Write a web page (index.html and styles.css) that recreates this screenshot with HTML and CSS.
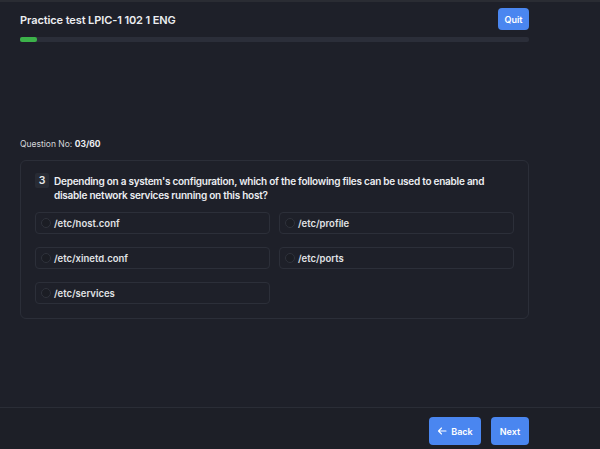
FILE: index.html
```html
<!DOCTYPE html>
<html>
<head>
<meta charset="utf-8">
<link rel="stylesheet" href="styles.css">
</head>
<body>
<div class="page">
  <header class="header">
    <div class="header-row">
      <h1 class="title">Practice test LPIC-1 102 1 ENG</h1>
      <button class="btn quit">Quit</button>
    </div>
    <div class="progress"><div class="progress-fill" style="width:17px"></div></div>
  </header>
  <main class="main">
    <div class="qno">Question No: <b>03/60</b></div>
    <section class="card">
      <div class="question">
        <span class="num">3</span>
        <p class="qtext">Depending on a system's configuration, which of the following files can be used to enable and disable network services running on this host?</p>
      </div>
      <div class="options">
        <label class="option"><span class="radio"></span>/etc/host.conf</label>
        <label class="option"><span class="radio"></span>/etc/profile</label>
        <label class="option"><span class="radio"></span>/etc/xinetd.conf</label>
        <label class="option"><span class="radio"></span>/etc/ports</label>
        <label class="option"><span class="radio"></span>/etc/services</label>
      </div>
    </section>
  </main>
  <footer class="footer">
    <button class="btn back"><svg width="10" height="8" viewBox="0 0 10 8"><path d="M9 4H1.5M4.5 1L1.5 4l3 3" fill="none" stroke="#fff" stroke-width="1.1" stroke-linecap="round" stroke-linejoin="round"/></svg>Back</button>
    <button class="btn next">Next</button>
  </footer>
</div>
</body>
</html>
```

FILE: styles.css
```css
* { box-sizing: border-box; }
html, body { margin: 0; padding: 0; }
body {
  background: #1e2029;
  font-family: Inter, "Noto Sans", sans-serif;
  color: #e6e7ea;
  width: 600px;
  height: 449px;
  overflow: hidden;
}
.page {
  height: 449px;
  display: flex;
  flex-direction: column;
  border-top: 2px solid #2a2c33;
}
.header {
  padding: 6px 71px 0 20px;
}
.header-row {
  display: flex;
  align-items: center;
  justify-content: space-between;
  height: 22px;
}
.title {
  margin: 0;
  font-size: 11px;
  font-weight: 600;
  color: #eceef1;
  letter-spacing: -0.1px;
  position: relative;
  top: 1px;
}
.btn {
  border: none;
  background: #4a86f0;
  color: #fff;
  font-family: Inter, "Noto Sans", sans-serif;
  font-weight: 600;
  font-size: 9px;
  border-radius: 4px;
  cursor: pointer;
  display: flex;
  align-items: center;
  justify-content: center;
}
.quit {
  width: 31px;
  height: 22px;
}
.progress {
  margin-top: 7px;
  height: 5px;
  background: #2b2e39;
  border-radius: 2px;
}
.progress-fill {
  height: 5px;
  background: #3cb24a;
  border-radius: 2px;
}
.main {
  flex: 1;
  padding: 96px 71px 0 20px;
}
.qno {
  font-size: 8.5px;
  color: #d5d7db;
  height: 12px;
  line-height: 12px;
}
.qno b { font-weight: 700; color: #eceef1; }
.card {
  margin-top: 10px;
  border: 1px solid #2b2e38;
  border-radius: 6px;
  padding: 12px 14px 14px 14px;
}
.question {
  display: flex;
  align-items: flex-start;
  gap: 5px;
}
.num {
  flex: none;
  width: 14px;
  height: 15px;
  background: #282b34;
  border-radius: 2px;
  font-size: 10.5px;
  font-weight: 600;
  display: flex;
  align-items: center;
  justify-content: center;
}
.qtext {
  margin: 0;
  font-size: 10px;
  font-weight: 600;
  line-height: 14px;
  color: #eceef1;
  letter-spacing: -0.25px;
  padding-top: 1px;
  padding-right: 8px;
}
.options {
  margin-top: 10px;
  display: grid;
  grid-template-columns: 1fr 1fr;
  column-gap: 9px;
  row-gap: 13px;
}
.option {
  height: 22px;
  border: 1px solid #2c2f39;
  border-radius: 4px;
  display: flex;
  align-items: center;
  padding-left: 5px;
  gap: 3px;
  font-size: 9.5px;
  font-weight: 600;
  color: #e1e3e6;
}
.radio {
  width: 10px;
  height: 10px;
  border-radius: 50%;
  border: 1px solid #2f323c;
  background: #1b1d24;
}
.footer {
  height: 42px;
  border-top: 1px solid #2a2d36;
  background: #1d1f27;
  display: flex;
  justify-content: flex-end;
  align-items: flex-start;
  padding: 9px 71px 0 0;
  gap: 10px;
}
.back, .next {
  height: 28px;
}
.back { width: 52px; gap: 4px; }
.next { width: 38px; }
```
